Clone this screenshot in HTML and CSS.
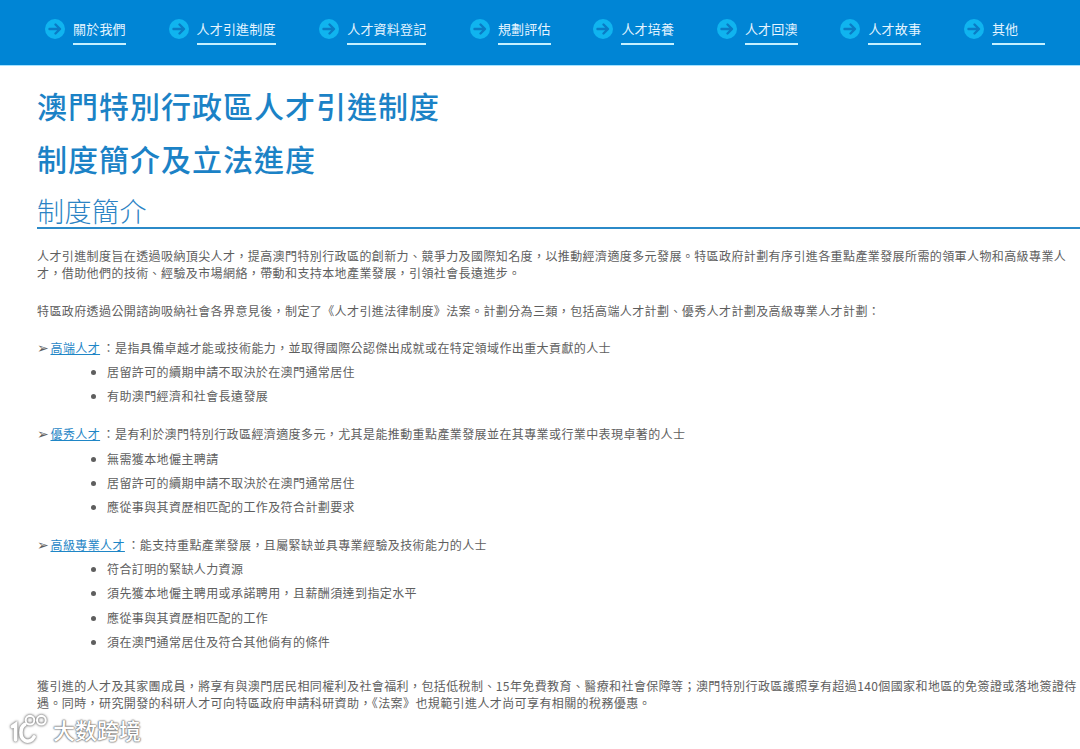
FILE: index.html
```html
<!DOCTYPE html>
<html lang="zh-Hant">
<head>
<meta charset="utf-8">
<title>澳門特別行政區人才引進制度</title>
<link rel="stylesheet" href="styles.css">
</head>
<body>
<svg class="defs" width="0" height="0" aria-hidden="true"><defs><symbol id="go" viewBox="0 0 20 20"><circle cx="10" cy="10" r="10" fill="#10b4ef"/><path d="M4.500 10h10M10.500 5.500 15 10l-4.500 4.500" fill="none" stroke="#0a7cc6" stroke-width="2.400" stroke-linecap="round" stroke-linejoin="round"/></symbol></defs></svg>
<nav class="nav">
  <a class="nav-item"><svg class="nav-icon"><use href="#go"/></svg><span class="nav-label">關於我們</span></a>
  <a class="nav-item"><svg class="nav-icon"><use href="#go"/></svg><span class="nav-label wide">人才引進制度</span></a>
  <a class="nav-item"><svg class="nav-icon"><use href="#go"/></svg><span class="nav-label wide">人才資料登記</span></a>
  <a class="nav-item"><svg class="nav-icon"><use href="#go"/></svg><span class="nav-label">規劃評估</span></a>
  <a class="nav-item"><svg class="nav-icon"><use href="#go"/></svg><span class="nav-label">人才培養</span></a>
  <a class="nav-item"><svg class="nav-icon"><use href="#go"/></svg><span class="nav-label">人才回澳</span></a>
  <a class="nav-item"><svg class="nav-icon"><use href="#go"/></svg><span class="nav-label">人才故事</span></a>
  <a class="nav-item"><svg class="nav-icon"><use href="#go"/></svg><span class="nav-label">其他</span></a>
</nav>
<main class="content">
  <h1 class="title">澳門特別行政區人才引進制度</h1>
  <h1 class="title title-second">制度簡介及立法進度</h1>
  <h2 class="section">制度簡介</h2>
  <p class="para first">人才引進制度旨在透過吸納頂尖人才，提高澳門特別行政區的創新力、競爭力及國際知名度，以推動經濟適度多元發展。特區政府計劃有序引進各重點產業發展所需的領軍人物和高級專業人才，借助他們的技術、經驗及市場網絡，帶動和支持本地產業發展，引領社會長遠進步。</p>
  <p class="para">特區政府透過公開諮詢吸納社會各界意見後，制定了《人才引進法律制度》法案。計劃分為三類，包括高端人才計劃、優秀人才計劃及高級專業人才計劃：</p>
  <p class="para lead"><span class="mark-arrow">➢</span> <a class="link">高端人才</a>：是指具備卓越才能或技術能力，並取得國際公認傑出成就或在特定領域作出重大貢獻的人士</p>
  <ul class="list">
    <li>居留許可的續期申請不取決於在澳門通常居住</li>
    <li>有助澳門經濟和社會長遠發展</li>
  </ul>
  <p class="para lead"><span class="mark-arrow">➢</span> <a class="link">優秀人才</a>：是有利於澳門特別行政區經濟適度多元，尤其是能推動重點產業發展並在其專業或行業中表現卓著的人士</p>
  <ul class="list">
    <li>無需獲本地僱主聘請</li>
    <li>居留許可的續期申請不取決於在澳門通常居住</li>
    <li>應從事與其資歷相匹配的工作及符合計劃要求</li>
  </ul>
  <p class="para lead"><span class="mark-arrow">➢</span> <a class="link">高級專業人才</a>：能支持重點產業發展，且屬緊缺並具專業經驗及技術能力的人士</p>
  <ul class="list">
    <li>符合訂明的緊缺人力資源</li>
    <li>須先獲本地僱主聘用或承諾聘用，且薪酬須達到指定水平</li>
    <li>應從事與其資歷相匹配的工作</li>
    <li>須在澳門通常居住及符合其他倘有的條件</li>
  </ul>
  <p class="para closing">獲引進的人才及其家團成員，將享有與澳門居民相同權利及社會福利，包括低稅制、15年免費教育、醫療和社會保障等；澳門特別行政區護照享有超過140個國家和地區的免簽證或落地簽證待遇。同時，研究開發的科研人才可向特區政府申請科研資助，《法案》也規範引進人才尚可享有相關的稅務優惠。</p>
</main>
<div class="mark">
  <svg class="mark-logo" viewBox="0 0 40 30" aria-hidden="true"><g fill="none" stroke="#fff" stroke-linecap="round"><path d="M3 13 6 11v15" stroke-width="3.500"/><path d="M15 11C10 14 10 24 15 26.500C18 28 22 27 24 23" stroke-width="3.500"/><circle cx="20" cy="7" r="4.200" stroke-width="2"/><circle cx="31" cy="7" r="4.200" stroke-width="2"/></g></svg>
  <span class="mark-text">大数跨境</span>
</div>
</body>
</html>
```
FILE: styles.css
```css
html, body { margin: 0; padding: 0; }
body {
  background: #fff;
  color: #5e5e5e;
  font-family: "Noto Sans CJK TC", "Noto Sans", sans-serif;
  height: 749px;
  overflow: hidden;
  position: relative;
}
.defs { position: absolute; }
.nav {
  display: flex;
  gap: 42.500px;
  height: 65px;
  padding-left: 45px;
  background: #0085d5;
  border-bottom: 1px solid #a5e2ff;
}
.nav-item {
  display: flex;
  align-items: flex-start;
  gap: 8px;
  padding-top: 19px;
  color: #e4f4ff;
}
.nav-icon { width: 20px; height: 20px; flex: none; }
.nav-label {
  display: block;
  min-width: 53px;
  height: 24px;
  font-size: 13px;
  letter-spacing: 0.2px;
  line-height: 20px;
  border-bottom: 2px solid #c5f0ff;
  white-space: nowrap;
}
.wide { margin-right: 1px; }
.content { padding-left: 37px; }
.title {
  margin: 0;
  padding-top: 18px;
  height: 35px;
  font-size: 30px;
  letter-spacing: 1px;
  line-height: 42px;
  font-weight: 500;
  color: #1b82c6;
  white-space: nowrap;
}
.section {
  margin: 0;
  margin-top: 21px;
  height: 34px;
  font-size: 27px;
  letter-spacing: 0.5px;
  font-weight: 300;
  line-height: 35px;
  color: #2b83c4;
  border-bottom: 2px solid #2b8ac8;
}
.para {
  margin: 0;
  padding-right: 1px;
  font-size: 12px;
  letter-spacing: 0.4px;
  line-height: 17px;
}
.first { margin-top: 18px; }
.para + .para { margin-top: 21px; }
.para + .lead { margin-top: 20px; }
.lead { margin-top: 21px; }
.mark-arrow { font-size: 14px; line-height: 0; margin-right: -2px; }
.link { color: #1f86c6; text-decoration: underline; margin-right: 2.500px; }
.list {
  margin: 0;
  padding: 0 0 0 70px;
  font-size: 12px;
  letter-spacing: 0.4px;
  line-height: 17px;
}
.list li { margin-top: 7.200px; }
.closing { margin-top: 27px; }
.mark {
  position: absolute;
  left: 9px;
  bottom: 5px;
  display: flex;
  align-items: center;
  gap: 2px;
}
.mark-logo {
  width: 42px;
  height: 31px;
  filter: drop-shadow(0 0 1px #777) drop-shadow(0 0 1px #aaa);
}
.mark-text {
  font-family: "Noto Sans CJK SC", sans-serif;
  font-size: 22px;
  font-weight: 500;
  line-height: 26px;
  color: #fff;
  text-shadow: 0 0 1px #666, 0 0 2px #666, 0 0 2px #888;
}
```
